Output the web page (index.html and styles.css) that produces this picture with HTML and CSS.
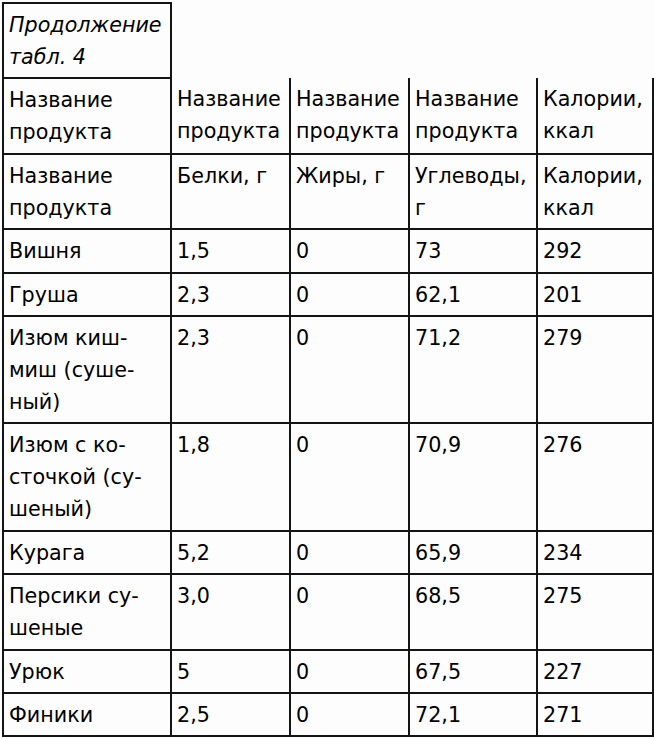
FILE: index.html
```html
<!DOCTYPE html>
<html lang="ru">
<head>
<meta charset="utf-8">
<link rel="stylesheet" href="styles.css">
</head>
<body>
<div class="page">
<table class="food">
  <colgroup>
    <col class="c1"><col class="c2"><col class="c3"><col class="c4"><col class="c5">
  </colgroup>
  <tr class="cap-row">
    <td class="cap">Продолжение<br>табл. 4</td>
    <td class="blank"></td><td class="blank"></td><td class="blank"></td><td class="blank"></td>
  </tr>
  <tr class="head">
    <td>Название<br>продукта</td>
    <td>Название<br>продукта</td>
    <td>Название<br>продукта</td>
    <td>Название<br>продукта</td>
    <td>Калории,<br>ккал</td>
  </tr>
  <tr>
    <td>Название<br>продукта</td>
    <td>Белки, г</td>
    <td>Жиры, г</td>
    <td>Углеводы,<br>г</td>
    <td>Калории,<br>ккал</td>
  </tr>
  <tr><td>Вишня</td><td>1,5</td><td>0</td><td>73</td><td>292</td></tr>
  <tr><td>Груша</td><td>2,3</td><td>0</td><td>62,1</td><td>201</td></tr>
  <tr><td>Изюм киш-<br>миш (суше-<br>ный)</td><td>2,3</td><td>0</td><td>71,2</td><td>279</td></tr>
  <tr><td>Изюм с ко-<br>сточкой (су-<br>шеный)</td><td>1,8</td><td>0</td><td>70,9</td><td>276</td></tr>
  <tr><td>Курага</td><td>5,2</td><td>0</td><td>65,9</td><td>234</td></tr>
  <tr><td>Персики су-<br>шеные</td><td>3,0</td><td>0</td><td>68,5</td><td>275</td></tr>
  <tr><td>Урюк</td><td>5</td><td>0</td><td>67,5</td><td>227</td></tr>
  <tr><td>Финики</td><td>2,5</td><td>0</td><td>72,1</td><td>271</td></tr>
</table>
</div>
</body>
</html>
```
FILE: styles.css
```css
html, body {
  margin: 0;
  padding: 0;
  background: #fdfdfd;
}
.page {
  padding: 2px 0 0 2px;
}
.food {
  border-collapse: collapse;
  table-layout: fixed;
  width: 650px;
  font-family: "DejaVu Sans", Verdana, sans-serif;
  font-size: 20.7px;
  line-height: 32px;
  color: #000;
}
.c1 { width: 168px; }
.c2 { width: 119px; }
.c3 { width: 119px; }
.c4 { width: 128px; }
.c5 { width: 116px; }
.food td {
  border: 2px solid #141414;
  padding: 5px 3px 4.4px 5px;
  vertical-align: top;
  text-align: left;
  white-space: nowrap;
  overflow: hidden;
}
.food td.cap {
  font-style: italic;
}
.food td.blank {
  border: none;
}
.food .head td {
  border-top: none;
}
.food .head td:first-child {
  border-top: 2px solid #141414;
}
```
